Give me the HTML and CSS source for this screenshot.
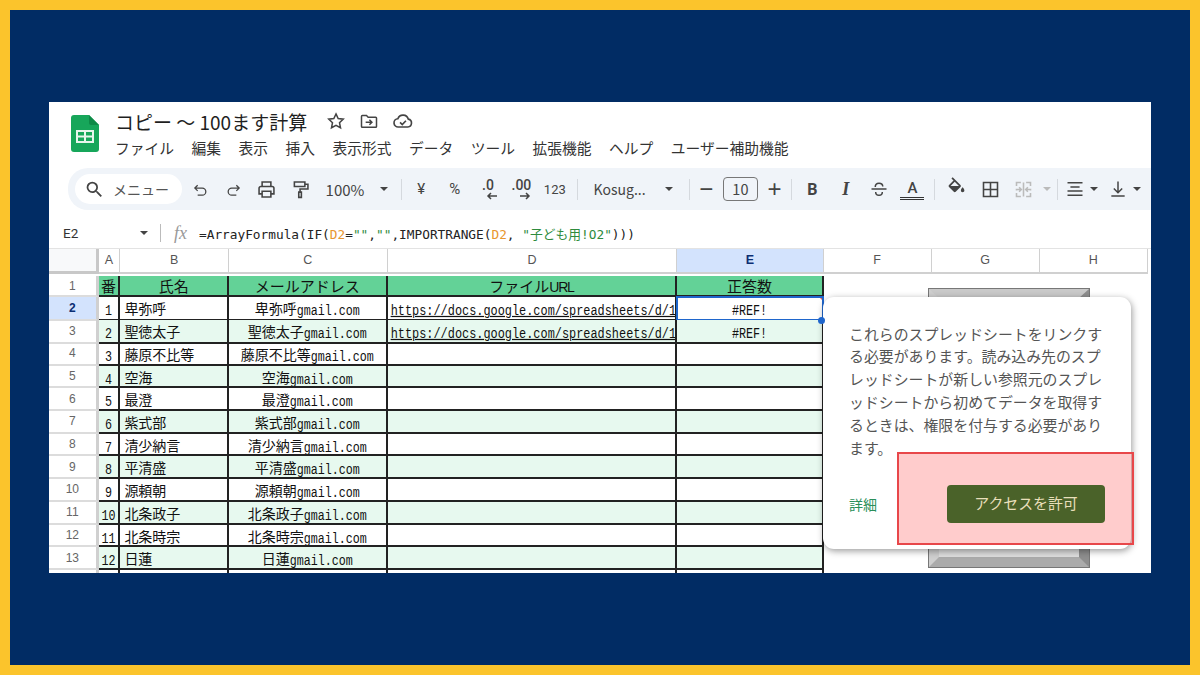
FILE: index.html
```html
<!DOCTYPE html>
<html lang="ja">
<head>
    <meta charset="UTF-8">
    <title>コピー 〜 100ます計算</title>
    <link rel="stylesheet" href="styles.css">
</head>
<body>
    <div class="frame">
        <div class="sheet-app">
            <div class="doc-head">
                <svg class="logo" viewBox="0 0 28 37" width="28" height="37">
                    <path d="M3 0H18L28 10V34a3 3 0 0 1-3 3H3a3 3 0 0 1-3-3V3a3 3 0 0 1 3-3z" fill="#17a65a"/>
                    <path d="M18 0L28 10H20a2 2 0 0 1-2-2z" fill="#0e8a47"/>
                    <path d="M5 15H23V28H5zM7 17V20.500H13V17zM15 17V20.500H21V17zM7 22.500V26H13V22.500zM15 22.500V26H21V22.500z" fill="#e8f5ec" fill-rule="evenodd"/>
                </svg>
                <div class="doc-text">
                    <div class="doc-title">
                        <span class="title-text">コピー 〜 100ます計算</span>
                        <svg class="title-icon star" viewBox="0 0 24 24" width="20" height="20"><path d="M12 3.500l2.600 5.600 6.100.7-4.500 4.200 1.200 6.100-5.400-3-5.400 3 1.200-6.100-4.500-4.200 6.100-.7z"/></svg>
                        <svg class="title-icon" viewBox="0 0 24 24" width="20" height="20"><path d="M3 6.500a1 1 0 0 1 1-1h5l2 2h9a1 1 0 0 1 1 1v10a1 1 0 0 1-1 1H4a1 1 0 0 1-1-1zM8 13.500h7M12.500 10.500l3 3-3 3"/></svg>
                        <svg class="title-icon" viewBox="0 0 24 24" width="22" height="22"><path d="M7 18.500a4.500 4.500 0 0 1-.6-9A6 6 0 0 1 17.800 10a4.300 4.300 0 0 1-.5 8.500zM8.800 13.500l2.400 2.400 4-4.200"/></svg>
                    </div>
                    <div class="menu">
                        <span>ファイル</span>
                        <span>編集</span>
                        <span>表示</span>
                        <span>挿入</span>
                        <span>表示形式</span>
                        <span>データ</span>
                        <span>ツール</span>
                        <span>拡張機能</span>
                        <span>ヘルプ</span>
                        <span>ユーザー補助機能</span>
                    </div>
                </div>
            </div>

            <div class="toolbar">
                <div class="search-pill">
                    <svg viewBox="0 0 24 24" width="21" height="21"><path class="solid" d="M15.500 14h-.79l-.28-.27A6.471 6.471 0 0 0 16 9.500 6.500 6.500 0 1 0 9.500 16c1.610 0 3.090-.59 4.230-1.570l.27.28v.79l5 4.990L20.490 19l-4.990-5zm-6 0C7.010 14 5 11.990 5 9.500S7.010 5 9.500 5 14 7.010 14 9.500 11.990 14 9.500 14z"/></svg>
                    <span>メニュー</span>
                </div>
                <span class="tb"><svg viewBox="0 0 24 24" width="17" height="17"><path d="M8 6L4 10L8 14M4 10H14.500a5 5 0 0 1 0 10H8"/></svg></span>
                <span class="tb"><svg viewBox="0 0 24 24" width="17" height="17"><path d="M16 6L20 10L16 14M20 10H9.500a5 5 0 0 0 0 10H16"/></svg></span>
                <span class="tb"><svg viewBox="0 0 24 24" width="21" height="21"><path d="M7 8V3.500H17V8M7 17H3.500V10.500a2 2 0 0 1 2-2H18.500a2 2 0 0 1 2 2V17H17M7 14H17V20.500H7z"/></svg></span>
                <span class="tb"><svg viewBox="0 0 24 24" width="21" height="21"><path d="M5 3.500H17V8.500H5zM17 6H20.500V11.500H11.500V15M10 15H13V21H10z"/></svg></span>
                <span class="tb-zoom">100%</span>
                <span class="tb-caret-wide"><i class="caret"></i></span>
                <i class="sep"></i>
                <span class="tb tb-sign tb-after-sep">¥</span>
                <span class="tb tb-sign">%</span>
                <span class="tb tb-dec">
                    <b>.0</b>
                    <svg class="dec-arrow" viewBox="0 0 12 8" width="12" height="8"><path d="M11 4H2M5 1L2 4L5 7"/></svg>
                </span>
                <span class="tb tb-dec">
                    <b>.00</b>
                    <svg class="dec-arrow" viewBox="0 0 12 8" width="12" height="8"><path d="M1 4H10M7 1L10 4L7 7"/></svg>
                </span>
                <span class="tb tb-small">123</span>
                <i class="sep sep-font"></i>
                <span class="tb-font"><span>Kosug...</span><i class="caret"></i></span>
                <i class="sep sep-size"></i>
                <span class="tb tb-big">−</span>
                <span class="size-box">10</span>
                <span class="tb tb-big">+</span>
                <i class="sep sep-flush"></i>
                <span class="tb tb-b">B</span>
                <span class="tb tb-i">I</span>
                <span class="tb"><svg viewBox="0 0 24 24" width="20" height="20"><path d="M3 12H21M7.500 9.500C7.500 6.500 9.500 5 12 5S16.500 6.500 16.500 9M8 15.500C8 18 10 19.500 12 19.500S16 18 16 15.500"/></svg></span>
                <span class="tb tb-a"><span>A</span></span>
                <i class="sep sep-fill"></i>
                <span class="tb tb-fill"><svg viewBox="0 0 24 20" width="21" height="18"><path class="solid" d="M16.560 8.940L7.620 0 6.210 1.410l2.380 2.380-5.150 5.150c-.59.59-.59 1.540 0 2.120l5.500 5.500c.29.29.68.44 1.060.44s.77-.15 1.060-.44l5.500-5.500c.59-.58.59-1.530 0-2.120zM5.210 10L10 5.210 14.790 10H5.210zM19 11.500s-2 2.170-2 3.500c0 1.100.9 2 2 2s2-.9 2-2c0-1.330-2-3.500-2-3.500z"/></svg></span>
                <span class="tb"><svg viewBox="0 0 24 24" width="21" height="21"><path d="M4 4H20V20H4zM12 4V20M4 12H20"/></svg></span>
                <span class="tb tb-off"><svg viewBox="0 0 24 24" width="21" height="21"><path d="M9 4H4V8M4 16V20H9M15 4H20V8M20 16V20H15M4 11V13M20 11V13M12 4V20M4 12H9M7 9.500L9.500 12L7 14.500M20 12H15M17 9.500L14.500 12L17 14.500"/></svg></span>
                <span class="tb-caret tb-off"><i class="caret"></i></span>
                <i class="sep sep-merge"></i>
                <span class="tb-narrow tb-after-merge"><svg viewBox="0 0 24 24" width="20" height="20"><path d="M3 4.500H21M6.500 9.500H17.500M3 14.500H21M3 19.500H21"/></svg></span>
                <span class="tb-caret"><i class="caret"></i></span>
                <span class="tb-narrow tb-after-align"><svg viewBox="0 0 24 24" width="20" height="20"><path d="M12 3V16M7 11.500L12 16.500L17 11.500M4 20.500H20"/></svg></span>
                <span class="tb-caret"><i class="caret"></i></span>
            </div>

            <div class="formula-bar">
                <span class="name-box">E2</span>
                <i class="caret caret-dark"></i>
                <i class="sep sep-name"></i>
                <span class="fx">fx</span>
                <span class="formula">=ArrayFormula(IF(<span class="ref">D2</span>=<span class="str">""</span>,<span class="str">""</span>,IMPORTRANGE(<span class="ref">D2</span>, <span class="str">"<span class="cjk">子ども用</span>!O2"</span>)))</span>
            </div>

            <div class="grid">
                <div class="col-heads">
                    <div class="corner"></div>
                    <div>A</div>
                    <div>B</div>
                    <div>C</div>
                    <div>D</div>
                    <div class="picked">E</div>
                    <div>F</div>
                    <div>G</div>
                    <div>H</div>
                </div>

                <div class="row row-title">
                    <div class="rh">1</div>
                    <div class="c">番</div>
                    <div class="c">氏名</div>
                    <div class="c">メールアドレス</div>
                    <div class="c">ファイル<span class="narrow">URL</span></div>
                    <div class="c">正答数</div>
                </div>
                <div class="row">
                    <div class="rh rh-picked">2</div>
                    <div class="c"><span class="lat">1</span></div>
                    <div class="c c-name">卑弥呼</div>
                    <div class="c">卑弥呼<span class="lat">gmail.com</span></div>
                    <div class="c c-url"><span class="lat">https://docs.google.com/spreadsheets/d/1</span></div>
                    <div class="c c-ref c-active"><span class="lat">#REF!</span><i class="handle"></i></div>
                </div>
                <div class="row row-alt">
                    <div class="rh">3</div>
                    <div class="c"><span class="lat">2</span></div>
                    <div class="c c-name">聖徳太子</div>
                    <div class="c">聖徳太子<span class="lat">gmail.com</span></div>
                    <div class="c c-url"><span class="lat">https://docs.google.com/spreadsheets/d/1</span></div>
                    <div class="c c-ref"><span class="lat">#REF!</span></div>
                </div>
                <div class="row">
                    <div class="rh">4</div>
                    <div class="c"><span class="lat">3</span></div>
                    <div class="c c-name">藤原不比等</div>
                    <div class="c">藤原不比等<span class="lat">gmail.com</span></div>
                    <div class="c"></div>
                    <div class="c"></div>
                </div>
                <div class="row row-alt">
                    <div class="rh">5</div>
                    <div class="c"><span class="lat">4</span></div>
                    <div class="c c-name">空海</div>
                    <div class="c">空海<span class="lat">gmail.com</span></div>
                    <div class="c"></div>
                    <div class="c"></div>
                </div>
                <div class="row">
                    <div class="rh">6</div>
                    <div class="c"><span class="lat">5</span></div>
                    <div class="c c-name">最澄</div>
                    <div class="c">最澄<span class="lat">gmail.com</span></div>
                    <div class="c"></div>
                    <div class="c"></div>
                </div>
                <div class="row row-alt">
                    <div class="rh">7</div>
                    <div class="c"><span class="lat">6</span></div>
                    <div class="c c-name">紫式部</div>
                    <div class="c">紫式部<span class="lat">gmail.com</span></div>
                    <div class="c"></div>
                    <div class="c"></div>
                </div>
                <div class="row">
                    <div class="rh">8</div>
                    <div class="c"><span class="lat">7</span></div>
                    <div class="c c-name">清少納言</div>
                    <div class="c">清少納言<span class="lat">gmail.com</span></div>
                    <div class="c"></div>
                    <div class="c"></div>
                </div>
                <div class="row row-alt">
                    <div class="rh">9</div>
                    <div class="c"><span class="lat">8</span></div>
                    <div class="c c-name">平清盛</div>
                    <div class="c">平清盛<span class="lat">gmail.com</span></div>
                    <div class="c"></div>
                    <div class="c"></div>
                </div>
                <div class="row">
                    <div class="rh">10</div>
                    <div class="c"><span class="lat">9</span></div>
                    <div class="c c-name">源頼朝</div>
                    <div class="c">源頼朝<span class="lat">gmail.com</span></div>
                    <div class="c"></div>
                    <div class="c"></div>
                </div>
                <div class="row row-alt">
                    <div class="rh">11</div>
                    <div class="c"><span class="lat">10</span></div>
                    <div class="c c-name">北条政子</div>
                    <div class="c">北条政子<span class="lat">gmail.com</span></div>
                    <div class="c"></div>
                    <div class="c"></div>
                </div>
                <div class="row">
                    <div class="rh">12</div>
                    <div class="c"><span class="lat">11</span></div>
                    <div class="c c-name">北条時宗</div>
                    <div class="c">北条時宗<span class="lat">gmail.com</span></div>
                    <div class="c"></div>
                    <div class="c"></div>
                </div>
                <div class="row row-alt">
                    <div class="rh">13</div>
                    <div class="c"><span class="lat">12</span></div>
                    <div class="c c-name">日蓮</div>
                    <div class="c">日蓮<span class="lat">gmail.com</span></div>
                    <div class="c"></div>
                    <div class="c"></div>
                </div>
                <div class="row">
                    <div class="rh"></div>
                    <div class="c"></div>
                    <div class="c"></div>
                    <div class="c"></div>
                    <div class="c"></div>
                    <div class="c"></div>
                </div>
            </div>

            <!-- image sitting on the sheet, mostly hidden by the dialog -->
            <div class="bevel"></div>

            <div class="dialog">
                <p class="dialog-text">これらのスプレッドシートをリンクす<br>る必要があります。読み込み先のスプ<br>レッドシートが新しい参照元のスプレ<br>ッドシートから初めてデータを取得す<br>るときは、権限を付与する必要があり<br>ます。</p>
                <div class="dialog-foot">
                    <span class="dialog-link">詳細</span>
                    <span class="dialog-btn">アクセスを許可</span>
                </div>
            </div>
            <div class="highlight"></div>
        </div>
    </div>
</body>
</html>
```

FILE: styles.css
```css
* {
    box-sizing: border-box;
}

body {
    margin: 0;
    font-family: "Noto Sans CJK JP", "Noto Sans", sans-serif;
    color: #222;
}

.frame {
    width: 1200px;
    height: 675px;
    border: 10px solid #fbc42c;
    background: #012c64;
    padding: 92px 39px 0;
}

.sheet-app {
    width: 1102px;
    height: 471px;
    background: #fff;
    position: relative;
    overflow: hidden;
}

/* title + menu */
.doc-head {
    height: 66px;
    display: flex;
    padding: 13px 0 0 22px;
}

.logo {
    flex: none;
}

.doc-text {
    margin-left: 16px;
    margin-top: -7px;
}

.doc-title {
    height: 26px;
    display: flex;
    align-items: center;
}

.title-text {
    font-size: 19px;
    width: 194px;
    white-space: nowrap;
    color: #1f1f1f;
}

.title-icon {
    fill: none;
    stroke: #444;
    stroke-width: 1.800;
    margin-left: 13px;
}

.title-icon.star {
    margin-left: 17px;
}

.menu {
    margin-top: 3px;
    height: 22px;
    display: flex;
    gap: 17.500px;
    font-size: 14.750px;
    line-height: 22px;
    color: #333;
    white-space: nowrap;
}

/* toolbar */
.toolbar {
    margin-left: 19px;
    height: 42px;
    background: #f0f4f9;
    border-radius: 20px 0 0 20px;
    display: flex;
    align-items: center;
    padding-left: 7px;
    color: #444;
    overflow: hidden;
    white-space: nowrap;
}

.toolbar svg {
    fill: none;
    stroke: #444;
    stroke-width: 1.800;
}

.toolbar svg .solid {
    fill: #444;
    stroke: none;
}

.search-pill {
    width: 107px;
    height: 30px;
    margin-right: 1.500px;
    border-radius: 15px;
    background: #fff;
    display: flex;
    align-items: center;
    padding-left: 9px;
    gap: 8px;
    font-size: 14px;
    color: #555;
    flex: none;
}

.tb {
    width: 33.400px;
    flex: none;
    display: flex;
    align-items: center;
    justify-content: center;
    font-size: 14px;
}

.tb-narrow {
    width: 24px;
    flex: none;
    display: flex;
    align-items: center;
    justify-content: center;
}

.tb-caret {
    width: 14px;
    flex: none;
    display: flex;
    align-items: center;
    justify-content: center;
}

.tb-zoom {
    width: 49px;
    padding-left: 8.500px;
    flex: none;
    font-size: 15px;
}

.tb-caret-wide {
    width: 35px;
    flex: none;
    display: flex;
    justify-content: center;
}

.caret {
    display: block;
    width: 0;
    height: 0;
    border-left: 4.500px solid transparent;
    border-right: 4.500px solid transparent;
    border-top: 4.500px solid #444;
}

.sep {
    width: 1px;
    height: 21px;
    background: #d5d9de;
    flex: none;
}

.tb-after-sep {
    margin-left: 2.500px;
}

.sep-font {
    margin-left: 5.500px;
}

.sep-size {
    margin-left: 8.500px;
}

.sep-fill {
    margin-left: 5.300px;
    margin-right: 4.600px;
}

.sep-flush {
    margin-right: 3.300px;
}

.sep-merge {
    margin-left: 3px;
}

.tb-after-merge {
    margin-left: 5px;
}

.tb-after-align {
    margin-left: 5px;
}

.tb-sign {
    font-family: "Roboto", sans-serif;
    font-size: 15px;
}

.tb-small {
    font-family: "Roboto", sans-serif;
    font-size: 13px;
}

.tb-dec {
    flex-direction: column;
    height: 24px;
    font-family: "Roboto", sans-serif;
    font-size: 14px;
    line-height: 15px;
}

.tb-dec b {
    font-weight: 500;
}

.toolbar .dec-arrow {
    stroke-width: 1.500;
    margin-left: 7px;
    margin-top: -1px;
}

.tb-font {
    width: 102px;
    flex: none;
    padding: 0 7px 0 15.500px;
    display: flex;
    align-items: center;
    justify-content: space-between;
    font-size: 14px;
}

.tb-big {
    font-size: 24px;
    line-height: 24px;
    font-family: "Liberation Sans", sans-serif;
}

.size-box {
    width: 35px;
    height: 24px;
    border: 1px solid #777;
    border-radius: 4px;
    flex: none;
    text-align: center;
    font-size: 14.500px;
    line-height: 22px;
}

.tb-b {
    font-family: "Roboto", sans-serif;
    font-weight: 700;
    font-size: 16px;
}

.tb-i {
    font-family: "Liberation Serif", serif;
    font-style: italic;
    font-weight: 700;
    font-size: 18px;
}

.tb-a span {
    display: block;
    width: 24px;
    text-align: center;
    font-family: "Roboto", sans-serif;
    font-weight: 500;
    font-size: 15px;
    line-height: 18px;
    border-bottom: 3px double #333;
}

.tb-fill svg {
    margin-top: -6px;
}

.tb-off svg {
    stroke: #bbb;
}

.tb-off .caret {
    border-top-color: #bbb;
}

/* formula bar */
.formula-bar {
    margin-top: 8px;
    height: 31px;
    border-bottom: 1px solid #e3e3e3;
    display: flex;
    align-items: center;
    padding-left: 14px;
}

.name-box {
    width: 77px;
    font-size: 13.500px;
    font-family: "Roboto", sans-serif;
    color: #333;
}

.caret-dark {
    flex: none;
}

.sep-name {
    margin-left: 12px;
    height: 18px;
    background: #bbb;
}

.fx {
    margin-left: 13px;
    width: 25px;
    font-family: "Liberation Serif", serif;
    font-style: italic;
    font-size: 18px;
    color: #999;
}

.formula {
    font-family: "DejaVu Sans Mono", monospace;
    font-size: 12.790px;
    color: #222;
    white-space: nowrap;
}

.formula .cjk {
    font-family: "Noto Sans CJK JP", sans-serif;
}

.ref {
    color: #e8962f;
}

.str {
    color: #2e8b3d;
}

/* grid */
.grid {
    height: 324px;
    overflow: hidden;
}

.col-heads {
    height: 26.700px;
    display: grid;
    grid-template-columns: 49.700px 21.700px 108.600px 158.700px 289.700px 146.300px 108px 108px 108px;
    font-family: "Liberation Sans", sans-serif;
    font-size: 12.500px;
    color: #555;
}

.col-heads div {
    height: 24.500px;
    border-right: 1px solid #d0d0d0;
    border-bottom: 2px solid #d0d0d0;
    display: flex;
    align-items: center;
    justify-content: center;
}

.col-heads .corner {
    background: #f8f9fa;
    border-right: 3px solid #c8c8c8;
    border-bottom: 3px solid #c8c8c8;
}

.col-heads .picked {
    background: #d3e3fd;
    color: #0b2e73;
    font-weight: 700;
}

.row {
    height: 22.720px;
    display: grid;
    grid-template-columns: 49.700px 21.700px 108.600px 158.700px 289.700px 146.300px;
    font-size: 14px;
    color: #111;
    white-space: nowrap;
}

.row-title {
    height: 21.700px;
}

.row-title .c {
    background: #63d297;
    font-size: 15px;
    line-height: 20px;
}

.row-alt .c {
    background: #e7f9ef;
}

.rh {
    border-right: 3px solid #d0d0d0;
    border-bottom: 2px solid #dcdcdc;
    font-family: "Liberation Sans", sans-serif;
    font-size: 12px;
    color: #666;
    display: flex;
    align-items: center;
    justify-content: center;
}

.rh-picked {
    background: #d3e3fd;
    color: #0b2e73;
    font-weight: 700;
}

.c {
    border-right: 2px solid #222;
    border-bottom: 2px solid #222;
    text-align: center;
    line-height: 22px;
    overflow: hidden;
    position: relative;
}

.c-name {
    text-align: left;
    padding-left: 4px;
}

/* narrow latin next to full-width kana, stretched a bit to stand as tall */
.lat {
    display: inline-block;
    font-family: "Liberation Mono", monospace;
    font-size: 11.700px;
    line-height: 14px;
    transform: scaleY(1.22);
}

.narrow {
    font-family: "Liberation Sans", sans-serif;
    font-size: 14px;
    letter-spacing: -1.200px;
}

.c-url {
    text-align: left;
    padding-left: 3px;
}

.c-url .lat {
    font-size: 11.900px;
    text-decoration: underline;
}

.c-ref {
    overflow: visible;
}

.c-ref::before {
    content: "";
    position: absolute;
    top: 0;
    right: -2px;
    border-top: 5px solid #e0605a;
    border-left: 5px solid transparent;
}

.c-active::after {
    content: "";
    position: absolute;
    left: -1px;
    right: -2px;
    top: -1px;
    bottom: -2px;
    border: 2px solid #1f66cc;
}

.handle {
    position: absolute;
    right: -3px;
    bottom: -5px;
    width: 7px;
    height: 7px;
    border-radius: 50%;
    background: #1f66cc;
    z-index: 1;
}

/* picture behind the dialog */
.bevel {
    position: absolute;
    left: 880px;
    top: 187px;
    width: 160px;
    height: 278px;
    background: #dedede;
    border-style: solid;
    border-width: 9px 10px 10px;
    border-color: #c9c9c9 #8e8e8e #ababab #cfcfcf;
    box-shadow: 0 0 0 1px #777;
}

/* permission dialog */
.dialog {
    position: absolute;
    left: 774px;
    top: 195px;
    width: 308px;
    height: 252px;
    background: #fff;
    border-radius: 11px;
    box-shadow: 1px 2px 7px rgba(0, 0, 0, 0.4);
    padding: 25.600px 26px 26px;
}

.dialog-text {
    margin: 0;
    font-size: 14.900px;
    line-height: 22.800px;
    color: #555;
    white-space: nowrap;
}

.dialog-foot {
    margin-top: 25.600px;
    display: flex;
    align-items: center;
    justify-content: space-between;
    position: relative;
    z-index: 2;
}

.dialog-link {
    color: #2b8f5a;
    font-size: 14px;
}

.dialog-btn {
    width: 158px;
    height: 38px;
    border-radius: 4px;
    background: #4a6229;
    color: #e8dfba;
    font-size: 14.900px;
    line-height: 36px;
    text-align: center;
}

.highlight {
    position: absolute;
    left: 848px;
    top: 350px;
    width: 237px;
    height: 93px;
    background: rgba(255, 0, 0, 0.2);
    border: 2px solid #e8474a;
}
```
